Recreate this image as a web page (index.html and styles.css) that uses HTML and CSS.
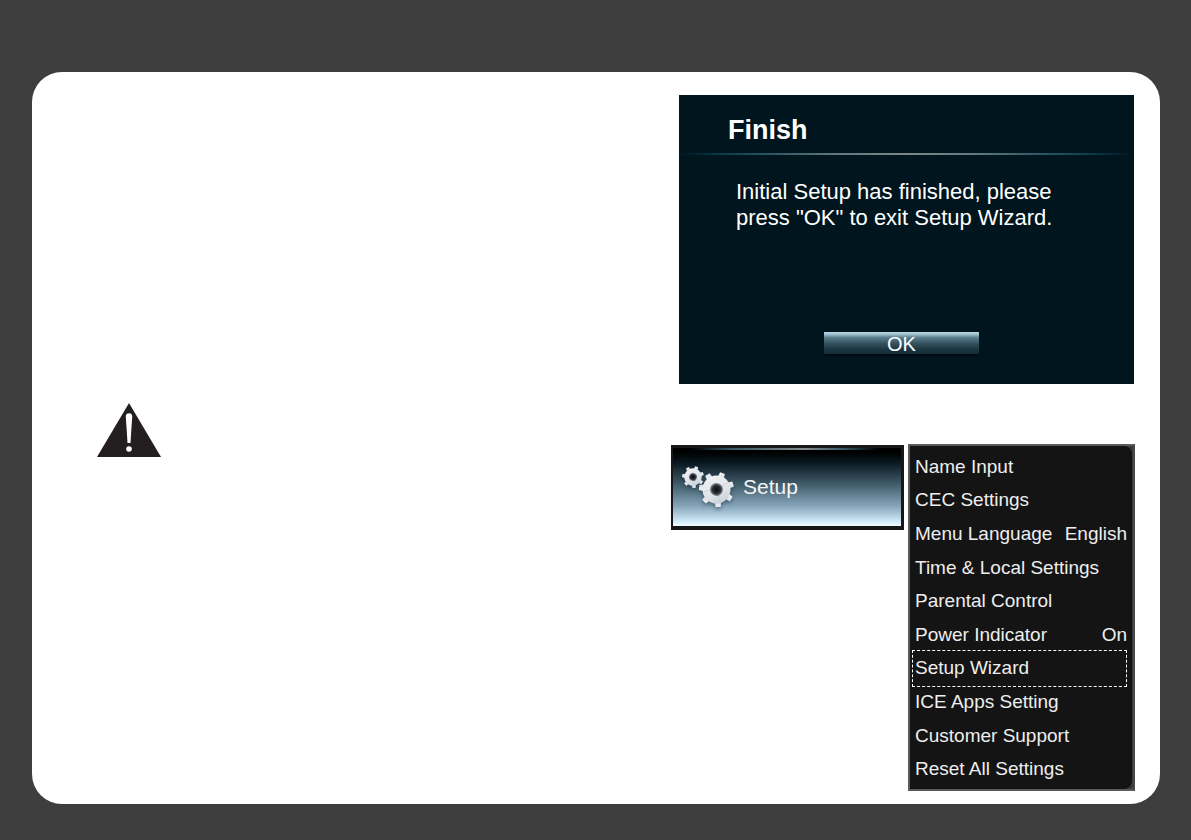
FILE: index.html
```html
<!DOCTYPE html>
<html lang="en">
<head>
    <meta charset="UTF-8">
    <meta name="viewport" content="width=device-width, initial-scale=1.0">
    <title>Setup Wizard</title>
    <link rel="stylesheet" href="styles.css">
</head>
<body>
    <main class="page">
        <section class="dialog">
            <h1 class="dialog-title">Finish</h1>
            <div class="dialog-line"></div>
            <p class="dialog-text">Initial Setup has finished, please press "OK" to exit Setup Wizard.</p>
            <button type="button" class="ok-button">OK</button>
        </section>

        <div class="lower">
            <svg class="warning" viewBox="0 0 64 54" role="img" aria-label="Warning">
                <path fill="#231f20" d="M32 0 64 54H0Z"/>
                <path fill="#fff" d="M28.800 13.500a3.200 3.200 0 0 1 6.400 0L33.500 40h-3Z"/>
                <circle fill="#fff" cx="32" cy="46" r="2.800"/>
            </svg>

            <div class="settings">
                <button type="button" class="setup-tile">
                    <svg class="gears" viewBox="0 0 54 44" aria-hidden="true">
                        <defs>
                            <linearGradient id="metal" x1="0" y1="0" x2="1" y2="1">
                                <stop offset="0" stop-color="#f4f5f7"/>
                                <stop offset="0.6" stop-color="#dfe3e8"/>
                                <stop offset="1" stop-color="#bcc6d0"/>
                            </linearGradient>
                            <radialGradient id="hole">
                                <stop offset="0" stop-color="#100c10"/>
                                <stop offset="0.6" stop-color="#252a31"/>
                                <stop offset="1" stop-color="#87919c"/>
                            </radialGradient>
                            <g id="gear">
                                <path id="tooth" d="M-3.200-12-2.600-17.500H2.600L3.200-12Z"/>
                                <use href="#tooth" transform="rotate(51.400)"/>
                                <use href="#tooth" transform="rotate(102.900)"/>
                                <use href="#tooth" transform="rotate(154.300)"/>
                                <use href="#tooth" transform="rotate(205.700)"/>
                                <use href="#tooth" transform="rotate(257.100)"/>
                                <use href="#tooth" transform="rotate(308.600)"/>
                                <circle r="14"/>
                                <circle r="6.500" fill="url(#hole)"/>
                            </g>
                        </defs>
                        <use href="#gear" fill="url(#metal)" transform="translate(11 12) rotate(20) scale(.62)"/>
                        <use href="#gear" fill="url(#metal)" transform="translate(34.500 24.500) rotate(20)"/>
                        <path d="M22 27 28 25M40 21 46 17M36 31 38 37" stroke="#c3cad1" stroke-width=".6"/>
                    </svg>
                    <span>Setup</span>
                </button>

                <nav class="menu">
                    <div class="menu-list">
                        <button type="button" class="menu-item">Name Input</button>
                        <button type="button" class="menu-item">CEC Settings</button>
                        <button type="button" class="menu-item">Menu Language <span>English</span></button>
                        <button type="button" class="menu-item">Time &amp; Local Settings</button>
                        <button type="button" class="menu-item">Parental Control</button>
                        <button type="button" class="menu-item">Power Indicator <span>On</span></button>
                        <button type="button" class="menu-item selected">Setup Wizard</button>
                        <button type="button" class="menu-item">ICE Apps Setting</button>
                        <button type="button" class="menu-item">Customer Support</button>
                        <button type="button" class="menu-item">Reset All Settings</button>
                    </div>
                </nav>
            </div>
        </div>
    </main>
</body>
</html>
```
FILE: styles.css
```css
* {
    margin: 0;
    padding: 0;
    box-sizing: border-box;
}

body {
    display: flex;
    min-height: 100vh;
    padding: 72px 31px 36px 32px;
    font-family: "Liberation Sans", Arial, sans-serif;
    background: #3e3e3e;
}

button {
    border: none;
    font-family: inherit;
    cursor: pointer;
}

.page {
    display: flex;
    flex: 1;
    flex-direction: column;
    padding: 23px 25px 13px 65px;
    border-radius: 30px;
    background: #fff;
}

.dialog {
    display: flex;
    flex-direction: column;
    align-self: flex-end;
    width: 455px;
    max-width: 100%;
    margin-right: 1px;
    padding: 20px 0 28px;
    background: #00151d;
    color: #fff;
}

.dialog-title {
    padding-left: 49px;
    font-size: 27px;
    line-height: 30px;
}

.dialog-line {
    height: 2px;
    margin: 8px 0 24px;
    background: linear-gradient(to right, #00151d, #0a3d50 10%, #607b80 35%, #7b8888 50%, #607b80 65%, #0a3d50 90%, #00151d);
}

.dialog-text {
    padding: 0 57px;
    font-size: 22px;
    line-height: 26px;
}

.ok-button {
    align-self: center;
    width: 155px;
    height: 24px;
    margin-top: 101px;
    margin-right: 10px;
    padding-top: 1px;
    border-bottom: 2px solid #000a18;
    background: linear-gradient(#b5dae6, #9abccb 12%, #5c7f8e 25%, #365460 50%, #1b3540 80%, #142c37);
    color: #fff;
    font-size: 20px;
    line-height: 22px;
}

.lower {
    display: flex;
    flex: 1;
    justify-content: space-between;
    margin-top: 19px;
}

.warning {
    width: 64px;
    height: 54px;
}

.settings {
    display: flex;
    gap: 4px;
    padding-top: 41px;
}

.setup-tile {
    display: flex;
    align-items: center;
    align-self: flex-start;
    gap: 7px;
    width: 233px;
    height: 85px;
    margin-top: 1px;
    padding: 0 9px;
    border: solid #151719;
    border-width: 3px 3px 4px 2px;
    background:
        linear-gradient(to right, transparent 8%, #315969 25%, #858b8c 58%, #315969 75%, transparent 90%) top / 100% 2px no-repeat,
        linear-gradient(#000 5%, #07151e 18%, #496574 50%, #88a7bb 75%, #d8f2ff 96%, #f5fcff);
    color: #f4f4f4;
    font-size: 21px;
}

.gears {
    width: 54px;
    height: 44px;
    filter: drop-shadow(0 2px 2px rgba(20, 40, 60, 0.5));
}

.menu {
    display: flex;
    width: 227px;
    border: 2px solid #5a5a5a;
    border-right-color: #484848;
    background: #3a3a3a;
}

.menu-list {
    display: grid;
    flex: 1;
    grid-auto-rows: 1fr;
    margin-right: 1px;
    padding: 4px 5px 3px 2px;
    border-radius: 0 8px 8px 0;
    background: #141414;
}

.menu-item {
    display: flex;
    align-items: center;
    justify-content: space-between;
    min-height: 32px;
    padding-left: 3px;
    background: none;
    color: #eee;
    font-size: 19px;
    text-align: left;
}

.selected {
    margin: -2px 0;
    padding-left: 2px;
    border: 1px dashed #fff;
}
```
